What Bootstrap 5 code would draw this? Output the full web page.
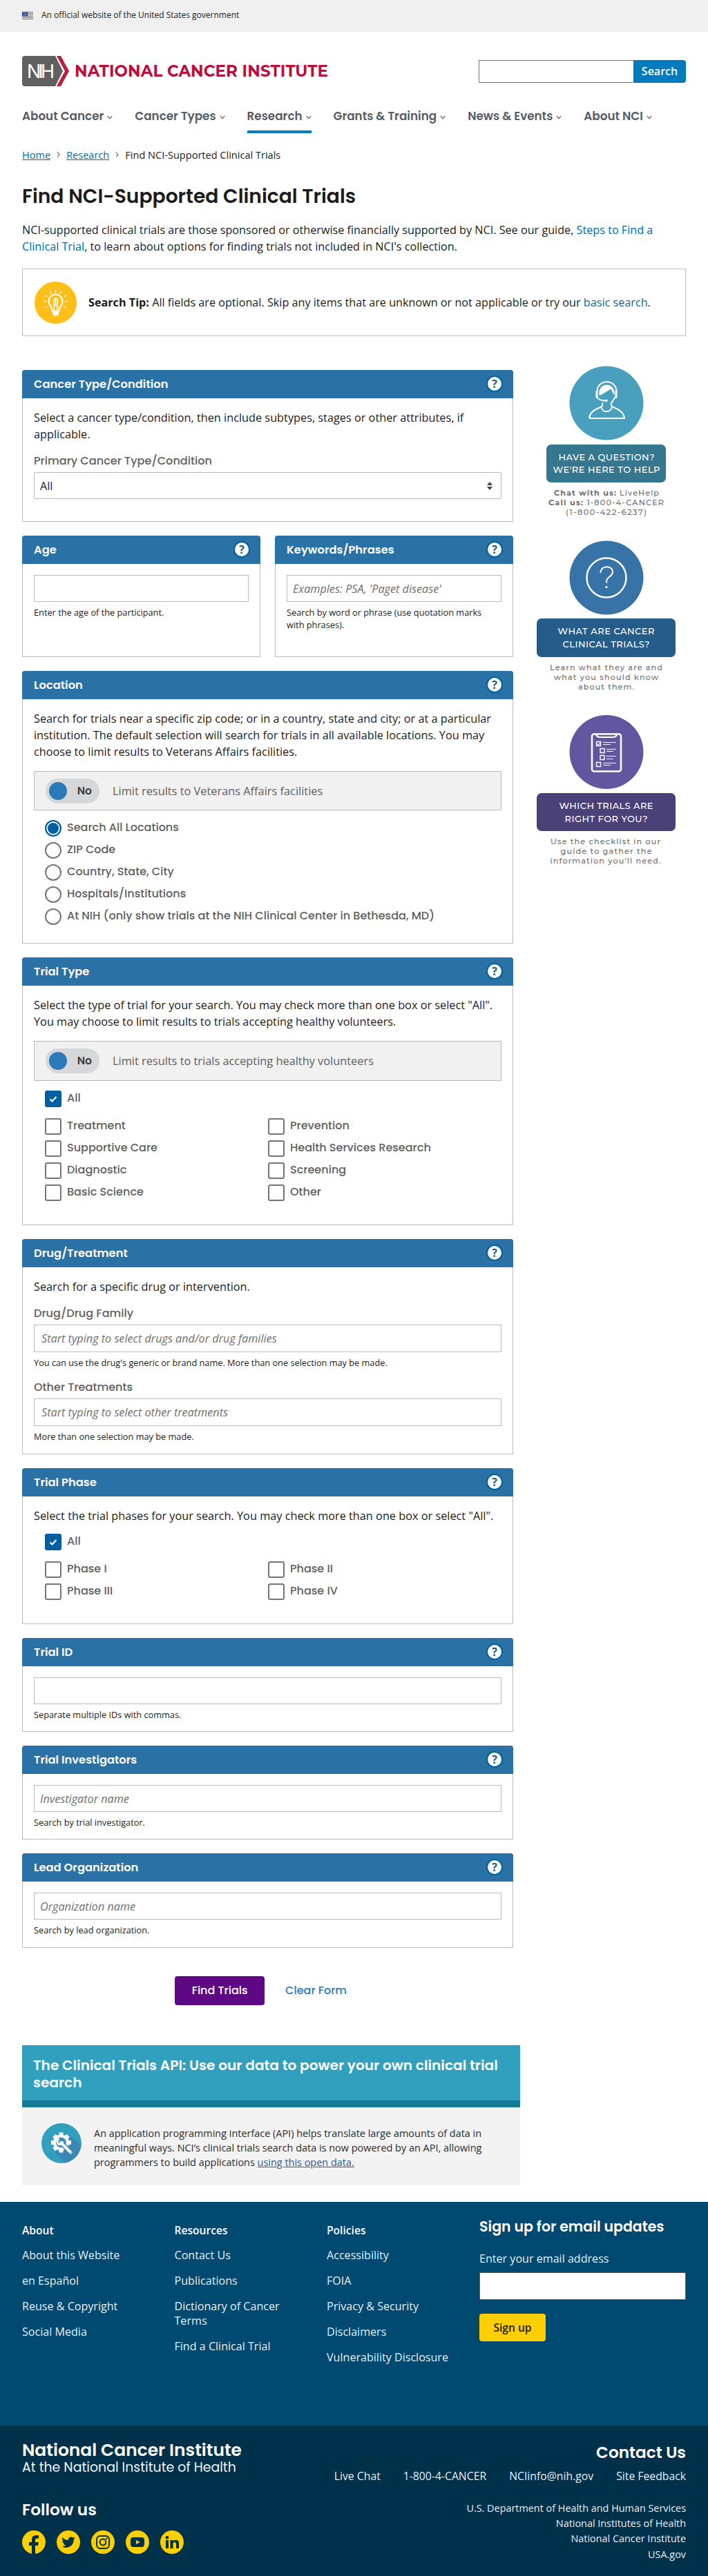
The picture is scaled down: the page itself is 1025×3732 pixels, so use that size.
<!DOCTYPE html>
<html lang="en">
<head>
<meta charset="utf-8">
<meta name="viewport" content="width=device-width, initial-scale=1">
<title>Find NCI-Supported Clinical Trials - NCI</title>
<link rel="stylesheet" href="https://cdn.jsdelivr.net/npm/bootstrap@5.3.0/dist/css/bootstrap.min.css">
<style>
:root{--pop:Poppins,Montserrat,Inter,sans-serif;--blue:#2a71a5;--edge:#bbb}
body{font-family:"Open Sans",sans-serif;font-size:16.2px;line-height:24px;color:#1b1b1b;background:#fff}
a{color:#006ba2;text-decoration:none}
svg{display:block;flex:none}
.wrap{padding-left:32px;padding-right:32px}
.gov{height:46px;background:#f0f0f0;font-size:12px;padding-bottom:2px}
.mast{height:104px;padding-top:10px}
.site-search input{width:224px;height:33px;border:1px solid #71767a;border-right:0}
.site-search button{width:76px;height:33px;background:#007bbd;color:#fff;border:0;border-radius:0 4px 4px 0;font-weight:600;font-size:16px}
.mainnav{gap:32px;height:39px;font:600 16.8px/24px var(--pop);color:#565c65}
.mainnav span{display:flex;align-items:center;gap:5px;white-space:nowrap;height:39px;padding-bottom:3px}
.mainnav svg{margin-top:3px}
.mainnav .on{box-shadow:0 4px 0 #007bbd}
.crumbs{font-size:14.56px;line-height:20px;gap:9px;margin-top:25px}
.crumbs a{text-decoration:underline}
h1{font:600 28.16px/36px var(--pop);margin:32px 0 0}
.intro{margin-top:19px}
.tip{border:1px solid var(--edge);height:98px;margin-top:20px;padding-left:17px;gap:17px}
.main-area{margin-top:49px}
.main-col{width:711px;gap:20px}
.side-col{width:202px;margin-left:34px;margin-top:-6px}
.panel{border:1px solid var(--edge);border-top:0;border-radius:4px 4px 0 0;font-size:16.3px}
.panel.half{width:345px}
.panel-top{height:41px;background:var(--blue);margin:0 -1px;padding:0 17px;border-radius:4px 4px 0 0;color:#fff;font:600 16.32px/24px var(--pop)}
.panel-in{padding:16px 16px 0}
.q{width:24px;height:24px;border:2px solid #00629b;border-radius:50%;background:#fff;color:#1a5c8e;font:700 16px/20px "Open Sans",sans-serif;text-align:center;margin-right:-2px;margin-top:-2px}
.lab{font:500 16.1px/24px var(--pop);color:#606060;margin:15px 0 4px}
.box{height:39px;border:1px solid var(--edge);padding:0 8px;width:100%;display:block;font-size:16.2px;color:#1b1b1b;background:#fff}
.box::placeholder{font-style:italic;color:#6f6f6f;opacity:1}
.box.deep{height:40px;padding:0 10px}
.hint{font-size:12.75px;line-height:18px;margin-top:6px;padding-right:20px}
.pick{border-radius:2px}
.limit{height:57px;background:#f1f1f1;border:1px solid var(--edge);margin-top:16px;padding-left:16px;gap:19px;color:#606060;font-size:16.35px}
.limit.tall{height:58px}
.tog{width:78px;height:36px;border-radius:18px;background:#d6d7d9;padding:0 11px 0 5px;font:600 15.5px/24px var(--pop);color:#3d3d3d}
.tog i{width:26px;height:26px;border-radius:50%;background:#2a7aba}
.opts{margin:14px 0 0 16px;font:500 16.05px/24px var(--pop);color:#606060}
.opt{height:24px;margin-bottom:8px;display:flex;gap:8px}
.opt span{margin-top:-1px}
.opt i{width:24px;height:24px;border:2px solid #71767a;flex:none}
.opt .rd{border-radius:50%}
.opt .rd.on{border-color:#005ea2;background:#005ea2;box-shadow:inset 0 0 0 2px #fff}
.opt .ck{border-radius:3px}
.opt .ck.on{background:#005ea2;border-color:#005ea2}
.two>div{width:323px}
.h220{height:220px}.h176{height:176px}.h395{height:395px}.h388{height:388px}.h312{height:312px}.h226{height:226px}.h136{height:136px}.h137{height:137px}
.actions{gap:30px;margin-top:21px;padding-right:20px}
.find{width:130px;height:42px;background:#5f0885;color:#fff;border:0;border-radius:4px;font:500 16px/24px var(--pop)}
.clear{font:500 16px/24px var(--pop);color:#2a7aba}
.api{width:721px;height:203px;background:#f3f3f3;margin-top:58px}
.api-top{height:90px;background:#319fbe;border-bottom:10px solid #177b95;color:#fff;padding:17px 16px;font:600 20.1px/25px var(--pop)}
.api-in{padding:23px 28px 0;gap:18px;font-size:14.45px;line-height:21px;color:#2b2b2b}
.api-in a{text-decoration:underline;color:#2b5a8c}
.foot{background:#004971;height:324px;margin-top:24px;color:#fff;font-size:16.1px;line-height:21px}
.foot .wrap{padding-top:31px}
.foot ul{list-style:none;padding:0;margin:0;width:172px;margin-right:49px;color:#e6eef3}
.foot li{margin-bottom:16px}
.foot li:first-child{font-weight:600;color:#fff;margin-bottom:15px;font-size:15.6px}
.foot h2{font:600 20.5px/28px var(--pop);margin:-9px 0 0}
.foot-lab{margin:22px 0 9px;color:#e6eef3}
.foot-box{height:40px;width:299px;border:1px solid #565c65;background:#fff;display:block}
.signup{width:96px;height:40px;border:0;border-radius:4px;background:#fdcf00;color:#1b1b1b;font-weight:600;font-size:15.6px;margin-top:20px}
.base{background:#00314b;height:218px;color:#fff}
.base .wrap{padding-top:21px}
.b1{font:600 24.96px/30px var(--pop)}
.b2{font:400 18.9px/24px var(--pop);margin-top:-2px;color:#f0f5f8}
.b3{font:600 23.2px/28px var(--pop)}
.follow{margin-top:35px}
.links{gap:33px;font-size:15.75px;line-height:24px;margin-top:8px;color:#e6eef3;justify-content:flex-end}
.gov-list{font-size:14.4px;line-height:22.2px;margin-top:24px;color:#e6eef3}
</style>
</head>
<body>
<div class="gov wrap d-flex align-items-center">
  <svg width="16" height="11" viewBox="0 0 16 11"><path fill="#fff" d="M0 0h16v11H0z"/><path fill="#db3e1f" d="M8 0h8v1H8zM8 2h8v1H8zM8 4h8v1H8zM8 6h8v1H0V6zM0 8h16v1H0zM0 10h16v1H0z"/><path fill="#1e33b1" d="M0 0h8v7H0z"/><path fill="#fff" d="M1 1h1v1H1zM3 1h1v1H3zM5 1h1v1H5zM2 3h1v1H2zM4 3h1v1H4zM6 3h1v1H6zM1 5h1v1H1zM3 5h1v1H3zM5 5h1v1H5z"/></svg>
  <span class="ms-2 ps-1">An official website of the United States government</span>
</div>
<header class="wrap">
  <div class="mast d-flex align-items-center justify-content-between">
    <svg width="444" height="46" viewBox="0 0 444 46"><path fill="#606060" d="M4 1h44l11 22-11 22H4q-4 0-4-4V5q0-4 4-4z"/><path fill="#bb1f3f" d="M50 1h6l12 22-12 22h-6l12-22z"/><text x="7" y="33" font-family="Inter,sans-serif" font-size="27" font-weight="400" fill="#fff" textLength="40">NIH</text><text x="76" y="31" font-family="Montserrat,sans-serif" font-size="23" font-weight="700" fill="#bb0e3d" textLength="367">NATIONAL CANCER INSTITUTE</text></svg>
    <form class="site-search d-flex"><input type="text" aria-label="Search"><button type="button">Search</button></form>
  </div>
  <nav class="mainnav d-flex align-items-center">
    <span>About Cancer <svg width="8" height="6" viewBox="0 0 8 6"><path d="M.8.8 4 4.8 7.2.8" fill="none" stroke="#565c65" stroke-width="1.2"/></svg></span>
    <span>Cancer Types <svg width="8" height="6" viewBox="0 0 8 6"><path d="M.8.8 4 4.8 7.2.8" fill="none" stroke="#565c65" stroke-width="1.2"/></svg></span>
    <span class="on">Research <svg width="8" height="6" viewBox="0 0 8 6"><path d="M.8.8 4 4.8 7.2.8" fill="none" stroke="#565c65" stroke-width="1.2"/></svg></span>
    <span>Grants &amp; Training <svg width="8" height="6" viewBox="0 0 8 6"><path d="M.8.8 4 4.8 7.2.8" fill="none" stroke="#565c65" stroke-width="1.2"/></svg></span>
    <span>News &amp; Events <svg width="8" height="6" viewBox="0 0 8 6"><path d="M.8.8 4 4.8 7.2.8" fill="none" stroke="#565c65" stroke-width="1.2"/></svg></span>
    <span>About NCI <svg width="8" height="6" viewBox="0 0 8 6"><path d="M.8.8 4 4.8 7.2.8" fill="none" stroke="#565c65" stroke-width="1.2"/></svg></span>
  </nav>
</header>
<main class="wrap">
  <div class="crumbs d-flex align-items-center">
    <a href="#">Home</a><svg width="5" height="8" viewBox="0 0 5 8"><path d="M1 .5 4 4 1 7.5" fill="none" stroke="#71767a" stroke-width="1.2"/></svg><a href="#">Research</a><svg width="5" height="8" viewBox="0 0 5 8"><path d="M1 .5 4 4 1 7.5" fill="none" stroke="#71767a" stroke-width="1.2"/></svg><span>Find NCI-Supported Clinical Trials</span>
  </div>
  <h1>Find NCI-Supported Clinical Trials</h1>
  <p class="intro mb-0">NCI-supported clinical trials are those sponsored or otherwise financially supported by NCI. See our guide, <a href="#">Steps to Find a Clinical Trial</a>, to learn about options for finding trials not included in NCI's collection.</p>
  <div class="tip d-flex align-items-center">
    <svg width="61" height="61" viewBox="0 0 61 61"><circle cx="30.5" cy="30.5" r="30.5" fill="#ffbe18"/><path d="M25.500 42c0-5-5-8-5-13.500a10 10 0 0 1 20 0c0 5.500-5 8.500-5 13.500z" fill="none" stroke="#fff" stroke-width="2.200"/><path d="M25 41.500h11l-1.500 6.500q-4 3.500-8 0z" fill="#fff"/><path d="M28.500 40 27.500 27q3-6 6 0l-1 13M30.500 25v11" fill="none" stroke="#fff" stroke-width="1.500"/><path d="M30.500 12v3.500M22.500 14l1.500 3M38.500 14l-1.500 3M15.500 20l3 2M45.500 20l-3 2M13.500 29H17M47.500 29H44M15.500 38l3-2M45.500 38l-3-2" stroke="#fff" stroke-width="1.500"/></svg>
    <div><strong>Search Tip:</strong> All fields are optional. Skip any items that are unknown or not applicable or try our <a href="#">basic search</a>.</div>
  </div>

  <div class="main-area d-flex align-items-start">
    <form class="main-col d-flex flex-column">
      <section class="panel h220"><div class="panel-top d-flex align-items-center justify-content-between">Cancer Type/Condition<span class="q">?</span></div>
        <div class="panel-in"><div>Select a cancer type/condition, then include subtypes, stages or other attributes, if applicable.</div>
          <div class="lab">Primary Cancer Type/Condition</div>
          <div class="box pick d-flex align-items-center justify-content-between">All<svg width="8" height="12" viewBox="0 0 8 12" class="me-1"><path fill="#3d4551" d="M4 0l4 5H0zM4 12l4-5H0z"/></svg></div></div></section>
      <div class="d-flex justify-content-between">
        <section class="panel half h176"><div class="panel-top d-flex align-items-center justify-content-between">Age<span class="q">?</span></div>
          <div class="panel-in"><input class="box" aria-label="Age"><div class="hint">Enter the age of the participant.</div></div></section>
        <section class="panel half h176"><div class="panel-top d-flex align-items-center justify-content-between">Keywords/Phrases<span class="q">?</span></div>
          <div class="panel-in"><input class="box" placeholder="Examples: PSA, 'Paget disease'"><div class="hint">Search by word or phrase (use quotation marks with phrases).</div></div></section>
      </div>
      <section class="panel h395"><div class="panel-top d-flex align-items-center justify-content-between">Location<span class="q">?</span></div>
        <div class="panel-in"><div>Search for trials near a specific zip code; or in a country, state and city; or at a particular institution. The default selection will search for trials in all available locations. You may choose to limit results to Veterans Affairs facilities.</div>
          <div class="limit d-flex align-items-center"><span class="tog d-flex align-items-center justify-content-between"><i></i>No</span>Limit results to Veterans Affairs facilities</div>
          <div class="opts"><div class="opt"><i class="rd on"></i><span>Search All Locations</span></div><div class="opt"><i class="rd"></i><span>ZIP Code</span></div><div class="opt"><i class="rd"></i><span>Country, State, City</span></div><div class="opt"><i class="rd"></i><span>Hospitals/Institutions</span></div><div class="opt"><i class="rd"></i><span>At NIH (only show trials at the NIH Clinical Center in Bethesda, MD)</span></div></div></div></section>
      <section class="panel h388"><div class="panel-top d-flex align-items-center justify-content-between">Trial Type<span class="q">?</span></div>
        <div class="panel-in"><div>Select the type of trial for your search. You may check more than one box or select "All". You may choose to limit results to trials accepting healthy volunteers.</div>
          <div class="limit tall d-flex align-items-center"><span class="tog d-flex align-items-center justify-content-between"><i></i>No</span>Limit results to trials accepting healthy volunteers</div>
          <div class="opts"><div class="opt mb-3"><i class="ck on"><svg width="20" height="20" viewBox="0 0 20 20"><path d="M5.500 10.500l3 3 6-6.500" fill="none" stroke="#fff" stroke-width="2.200"/></svg></i><span>All</span></div>
            <div class="two d-flex"><div><div class="opt"><i class="ck"></i><span>Treatment</span></div><div class="opt"><i class="ck"></i><span>Supportive Care</span></div><div class="opt"><i class="ck"></i><span>Diagnostic</span></div><div class="opt"><i class="ck"></i><span>Basic Science</span></div></div>
            <div><div class="opt"><i class="ck"></i><span>Prevention</span></div><div class="opt"><i class="ck"></i><span>Health Services Research</span></div><div class="opt"><i class="ck"></i><span>Screening</span></div><div class="opt"><i class="ck"></i><span>Other</span></div></div></div></div></div></section>
      <section class="panel h312"><div class="panel-top d-flex align-items-center justify-content-between">Drug/Treatment<span class="q">?</span></div>
        <div class="panel-in"><div>Search for a specific drug or intervention.</div>
          <div class="lab">Drug/Drug Family</div><input class="box deep" placeholder="Start typing to select drugs and/or drug families"><div class="hint">You can use the drug's generic or brand name. More than one selection may be made.</div>
          <div class="lab">Other Treatments</div><input class="box deep" placeholder="Start typing to select other treatments"><div class="hint">More than one selection may be made.</div></div></section>
      <section class="panel h226"><div class="panel-top d-flex align-items-center justify-content-between">Trial Phase<span class="q">?</span></div>
        <div class="panel-in"><div>Select the trial phases for your search. You may check more than one box or select "All".</div>
          <div class="opts"><div class="opt mb-3"><i class="ck on"><svg width="20" height="20" viewBox="0 0 20 20"><path d="M5.500 10.500l3 3 6-6.500" fill="none" stroke="#fff" stroke-width="2.200"/></svg></i><span>All</span></div>
            <div class="two d-flex"><div><div class="opt"><i class="ck"></i><span>Phase I</span></div><div class="opt"><i class="ck"></i><span>Phase III</span></div></div><div><div class="opt"><i class="ck"></i><span>Phase II</span></div><div class="opt"><i class="ck"></i><span>Phase IV</span></div></div></div></div></div></section>
      <section class="panel h136"><div class="panel-top d-flex align-items-center justify-content-between">Trial ID<span class="q">?</span></div><div class="panel-in"><input class="box" aria-label="Trial ID"><div class="hint">Separate multiple IDs with commas.</div></div></section>
      <section class="panel h136"><div class="panel-top d-flex align-items-center justify-content-between">Trial Investigators<span class="q">?</span></div><div class="panel-in"><input class="box" placeholder="Investigator name"><div class="hint">Search by trial investigator.</div></div></section>
      <section class="panel h137"><div class="panel-top d-flex align-items-center justify-content-between">Lead Organization<span class="q">?</span></div><div class="panel-in"><input class="box" placeholder="Organization name"><div class="hint">Search by lead organization.</div></div></section>
      <div class="actions d-flex align-items-center justify-content-center"><button type="button" class="find">Find Trials</button><a href="#" class="clear">Clear Form</a></div>
    </form>

    <aside class="side-col">
      <svg width="202" height="724" viewBox="777 530 202 724" font-family="Montserrat,sans-serif" text-anchor="middle">
        <circle cx="878" cy="584" r="53.500" fill="#489fbe"/>
        <g transform="translate(824.500 530.500)" fill="none" stroke="#fff" stroke-width="2">
          <path d="M28.500 75.500h51c-1-9-8-13-15-15.500-4-1.500-5-3-4-6.500l6-9M28.500 75.500c1-9 8-13 15-15.500 4-1.500 5-3 4-7M46 59c1 9 14 9 15.500 0"/>
          <path d="M40 37c0-19 28-19 28 0"/>
          <path d="M39.500 36v10M67.500 36v10" stroke-width="3"/><path d="M40 45q3 5 12 5"/><ellipse cx="53" cy="50" rx="2.500" ry="1.700" fill="#fff" stroke="none"/>
          <path d="M43 42V36q3-9 11-9t11 9v6l-2-3-3-6-15 9z" fill="#fff" stroke="none"/>
        </g>
        <rect x="791" y="644" width="173" height="55" rx="7" fill="#34778f"/>
        <g fill="#fff" font-size="13" font-weight="500"><text x="878" y="666.500" textLength="139">HAVE A QUESTION?</text><text x="878" y="684.500" textLength="155">WE'RE HERE TO HELP</text></g>
        <g fill="#6c6c6c" font-size="11.200" font-weight="500"><text x="878" y="717.500" textLength="152"><tspan font-weight="700">Chat with us:</tspan> LiveHelp</text><text x="877.500" y="731.500" textLength="167"><tspan font-weight="700">Call us:</tspan> 1-800-4-CANCER</text><text x="877.500" y="745.500" textLength="117">(1-800-422-6237)</text></g>
        <circle cx="878" cy="837" r="53.500" fill="#3773a7"/>
        <circle cx="878" cy="837" r="28.500" fill="none" stroke="#fff" stroke-width="2.400"/>
        <path d="M869.500 830c0-12 17.500-11 17.500-1.500 0 7-9 7-9 14v2" fill="none" stroke="#fff" stroke-width="2"/><circle cx="878" cy="850.500" r="1.600" fill="#fff"/>
        <rect x="777" y="896" width="201" height="56" rx="7" fill="#245c8a"/>
        <g fill="#fff" font-size="13" font-weight="500"><text x="877.500" y="919" textLength="140">WHAT ARE CANCER</text><text x="877.500" y="937.500" textLength="126">CLINICAL TRIALS?</text></g>
        <g fill="#6c6c6c" font-size="11.200" font-weight="500"><text x="877.500" y="971" textLength="163">Learn what they are and</text><text x="877.500" y="985" textLength="151">what you should know</text><text x="877.500" y="999" textLength="81">about them.</text></g>
        <circle cx="878" cy="1089.500" r="53.500" fill="#6356a0"/>
        <g fill="none" stroke="#fff"><rect x="857" y="1063.500" width="42" height="54" rx="3" stroke-width="2.600"/><path d="M863 1063q0 5 6 5h18q6 0 6-5" stroke-width="2.200"/><path d="M863.500 1074.500h6v6h-6zM869 1084.500h6v6h-6zM869 1094.500h6v6h-6zM863.500 1104.500h6v6h-6z" stroke-width="1.400"/><path d="M864 1077l2 2.500 4-5M873 1075.500h19M873 1078.500h11M878 1085.500h14M878 1088.500h10M878 1095.500h14M878 1099.500h10M873 1105.500h19M873 1108.500h11" stroke-width="1.200"/></g>
        <rect x="777" y="1149" width="201" height="55" rx="7" fill="#4a4178"/>
        <g fill="#fff" font-size="13" font-weight="500"><text x="877.500" y="1172" textLength="136">WHICH TRIALS ARE</text><text x="877.500" y="1190.500" textLength="120">RIGHT FOR YOU?</text></g>
        <g fill="#6c6c6c" font-size="11.200" font-weight="500"><text x="876.500" y="1223" textLength="159">Use the checklist in our</text><text x="877.500" y="1237" textLength="132">guide to gather the</text><text x="876.500" y="1251" textLength="160">information you'll need.</text></g>
      </svg>
    </aside>
  </div>

  <section class="api">
    <div class="api-top">The Clinical Trials API: Use our data to power your own clinical trial search</div>
    <div class="api-in d-flex">
      <svg width="58" height="58" viewBox="0 0 58 58"><circle cx="29" cy="29" r="29" fill="#319fbe"/><path d="M20 43 39 17 57 32A29 29 0 0 1 34 57.500z" fill="#3a86b4"/><g stroke="#fff" stroke-width="6"><path d="M28.500 13.500v29M14 28h29M18.300 17.800l20.400 20.400M38.700 17.800 18.300 38.200"/></g><circle cx="28.500" cy="28" r="11.500" fill="#fff"/><circle cx="28.500" cy="28" r="7.500" fill="#3a8fb8"/><path d="M27 27l16 16" stroke="#3a86b4" stroke-width="7"/><path d="M28 28l14.500 14.500" stroke="#fff" stroke-width="4" stroke-linecap="round"/><path d="M25.500 23a4 4 0 1 0 5.500 3.500" fill="none" stroke="#fff" stroke-width="2.500"/><circle cx="42.500" cy="42.500" r="1" fill="#319fbe"/></svg>
      <div class="pt-1">An application programming interface (API) helps translate large amounts of data in meaningful ways. NCI’s clinical trials search data is now powered by an API, allowing programmers to build applications <a href="#">using this open data.</a></div>
    </div>
  </section>
</main>

<footer>
  <div class="foot"><div class="wrap d-flex">
    <ul><li>About</li><li>About this Website</li><li>en Español</li><li>Reuse &amp; Copyright</li><li>Social Media</li></ul>
    <ul><li>Resources</li><li>Contact Us</li><li>Publications</li><li>Dictionary of Cancer Terms</li><li>Find a Clinical Trial</li></ul>
    <ul class="text-nowrap"><li>Policies</li><li>Accessibility</li><li>FOIA</li><li>Privacy &amp; Security</li><li>Disclaimers</li><li>Vulnerability Disclosure</li></ul>
    <div class="flex-shrink-0"><h2>Sign up for email updates</h2><div class="foot-lab">Enter your email address</div><input class="foot-box" aria-label="Email"><button type="button" class="signup">Sign up</button></div>
  </div></div>
  <div class="base"><div class="wrap d-flex justify-content-between">
    <div><div class="b1">National Cancer Institute</div><div class="b2">At the National Institute of Health</div><div class="b3 follow">Follow us</div>
      <div class="d-flex gap-3 mt-3">
        <svg width="34" height="34" viewBox="0 0 34 34"><circle cx="17" cy="17" r="17" fill="#fdcf00"/><path fill="#00314b" d="M14 34V22h-4v-5h4v-4q0-6 6-6h4v4.500h-2.500q-2.500 0-2.500 2.500v3h5l-1 5h-4v12z"/></svg>
        <svg width="34" height="34" viewBox="0 0 34 34"><circle cx="17" cy="17" r="17" fill="#fdcf00"/><path fill="#00314b" transform="translate(7.500 7.500) scale(.8)" d="M24 4.600a10 10 0 0 1-2.800.8 5 5 0 0 0 2.100-2.700c-1 .6-2 1-3.100 1.200a5 5 0 0 0-8.400 4.500C7.700 8.200 4.100 6.200 1.700 3.200a5 5 0 0 0 1.500 6.500c-.8 0-1.600-.2-2.200-.6a5 5 0 0 0 4 4.900c-.7.200-1.500.2-2.200.1a5 5 0 0 0 4.600 3.400A10 10 0 0 1 0 19.500 14 14 0 0 0 21.500 7.100 10 10 0 0 0 24 4.600z"/></svg>
        <svg width="34" height="34" viewBox="0 0 34 34"><circle cx="17" cy="17" r="17" fill="#fdcf00"/><g fill="none" stroke="#00314b" stroke-width="2"><rect x="8" y="8" width="18" height="18" rx="5"/><circle cx="17" cy="17" r="4.400"/></g><circle cx="22.300" cy="11.700" r="1.300" fill="#00314b"/></svg>
        <svg width="34" height="34" viewBox="0 0 34 34"><circle cx="17" cy="17" r="17" fill="#fdcf00"/><rect x="7" y="10" width="20" height="14" rx="4" fill="#00314b"/><path fill="#fdcf00" d="m15 14 6 3-6 3z"/></svg>
        <svg width="34" height="34" viewBox="0 0 34 34"><circle cx="17" cy="17" r="17" fill="#fdcf00"/><path fill="#00314b" d="M8 14h4v12H8zM14.500 14h4v1.700q1.200-2 4-2 4.500 0 4.500 5.300v7h-4v-6.300q0-2.700-2-2.700-2.500 0-2.500 2.800V26h-4z"/><circle cx="10" cy="10.300" r="2.300" fill="#00314b"/></svg>
      </div></div>
    <div class="text-end"><div class="b3 pt-1">Contact Us</div><div class="links d-flex"><span>Live Chat</span><span>1-800-4-CANCER</span><span>NCIinfo@nih.gov</span><span>Site Feedback</span></div>
      <div class="gov-list">U.S. Department of Health and Human Services<br>National Institutes of Health<br>National Cancer Institute<br>USA.gov</div></div>
  </div></div>
</footer>
<script src="https://cdn.jsdelivr.net/npm/bootstrap@5.3.0/dist/js/bootstrap.bundle.min.js"></script>
</body>
</html>
